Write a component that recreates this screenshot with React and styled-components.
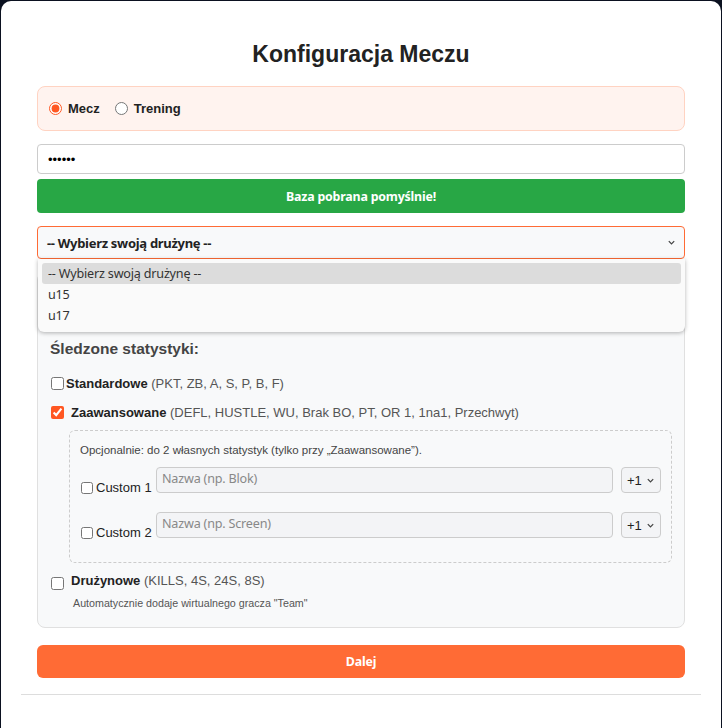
import React from "react";
import styled, { createGlobalStyle } from "styled-components";

const GlobalStyle = createGlobalStyle`
  html, body {
    margin: 0;
    padding: 0;
    background: #0b1120;
  }
  body {
    padding: 1px 1px 0 1px;
    font-family: "Liberation Sans", Arial, sans-serif;
    color: #222;
  }
`;

const uiFont = `"Noto Sans", "Open Sans", sans-serif`;

const Card = styled.div`
  background: #fff;
  border-radius: 10px 10px 0 0;
  padding: 20px 20px 34px;
  min-height: 700px;
  box-sizing: border-box;
`;

const Form = styled.div`
  padding: 0 16px 16px;
  display: flex;
  flex-direction: column;
`;

const Title = styled.h2`
  margin: 20px 0 18px;
  text-align: center;
  font-size: 23px;
  line-height: 27px;
  font-weight: bold;
  color: #222;
`;

const ModeBox = styled.div`
  display: flex;
  align-items: center;
  gap: 15px;
  height: 43px;
  padding: 0 11px;
  background: #fff3ef;
  border: 1px solid #ffd3c2;
  border-radius: 8px;
`;

const RadioLabel = styled.label`
  display: flex;
  align-items: center;
  gap: 6px;
  font-size: 13px;
  font-weight: bold;
  color: #222;

  input {
    margin: 0;
    width: 13px;
    height: 13px;
    accent-color: #ff5722;
  }
`;

const PasswordInput = styled.input`
  margin-top: 13px;
  height: 30px;
  box-sizing: border-box;
  border: 1px solid #ccc;
  border-radius: 4px;
  padding: 0 10px;
  font-size: 13px;
  background: #fff;
`;

const Button = styled.button`
  margin-top: ${(p) => p.$top}px;
  height: ${(p) => p.$height}px;
  border: none;
  border-radius: ${(p) => p.$radius}px;
  background: ${(p) => p.$bg};
  color: #fff;
  font-family: ${uiFont};
  font-size: 12.4px;
  font-weight: bold;
  letter-spacing: -0.2px;
`;

const SelectWrap = styled.div`
  position: relative;
  margin-top: 13px;
`;

const SelectBox = styled.div`
  height: 33px;
  box-sizing: border-box;
  border: 1px solid #ff6b35;
  border-radius: 4px;
  background: #f8f9fa;
  display: flex;
  align-items: center;
  justify-content: space-between;
  padding: 0 8px 0 9px;
  font-family: ${uiFont};
  font-size: 13px;
  font-weight: bold;
  letter-spacing: -0.3px;
  color: #222;
`;

const Chevron = styled.svg`
  width: 9px;
  height: 9px;
  color: #444;
`;

const Dropdown = styled.ul`
  position: absolute;
  z-index: 5;
  top: 33px;
  left: 1px;
  right: 0;
  margin: 0;
  padding: 4px 4px 6px;
  list-style: none;
  background: #fafafa;
  border-radius: 0 0 6px 6px;
  box-shadow: 0 1px 4px rgba(0, 0, 0, 0.3);
  font-family: ${uiFont};
  font-size: 12.6px;
  color: #333;
`;

const Option = styled.li`
  height: 21px;
  line-height: 21px;
  padding: 0 6px;
  border-radius: 3px;
  letter-spacing: -0.2px;
  background: ${(p) => (p.$active ? "#dcdcdc" : "transparent")};
`;

const StatsBox = styled.div`
  margin-top: 13px;
  background: #f8f9fa;
  border: 1px solid #e0e0e0;
  border-radius: 8px;
  padding: 67px 12px 17px;
`;

const StatsTitle = styled.h3`
  margin: 0 0 18px;
  font-size: 15.5px;
  line-height: 18px;
  color: #444;
  font-weight: bold;
`;

const CheckRow = styled.label`
  display: flex;
  align-items: ${(p) => (p.$low ? "flex-end" : "center")};
  gap: ${(p) => p.$gap}px;
  margin-top: ${(p) => p.$top}px;
  font-size: 13px;
  line-height: 15px;
  color: #222;

  input {
    margin: 0 0 ${(p) => (p.$low ? "-2px" : "0")} 1px;
    width: 13px;
    height: 13px;
    accent-color: #ff5722;
  }
`;

const Muted = styled.span`
  color: #555;
`;

const CustomBox = styled.div`
  margin: 10px 0 0 19px;
  border: 1px dashed #ccc;
  border-radius: 6px;
  padding: 13px 10px 22px;
`;

const CustomHint = styled.div`
  font-size: 11.5px;
  line-height: 13px;
  color: #444;
  margin-bottom: 10px;
`;

const CustomRow = styled.div`
  display: flex;
  align-items: flex-start;
  gap: 8px;
  margin-top: ${(p) => p.$top}px;
`;

const CustomLabel = styled.label`
  display: flex;
  align-items: center;
  gap: 3px;
  margin-top: 13px;
  width: 68px;
  white-space: nowrap;
  font-size: 13px;
  line-height: 15px;
  color: #222;

  input {
    margin: 0 0 0 1px;
    width: 12px;
    height: 12px;
  }
`;

const NameInput = styled.input`
  flex: 1;
  min-width: 0;
  height: 26px;
  box-sizing: border-box;
  border: 1px solid #ccc;
  border-radius: 4px;
  background: #f3f4f6;
  padding: 0 5px 4px;
  font-family: ${uiFont};
  font-size: 12.6px;
  letter-spacing: -0.2px;

  &::placeholder {
    color: #888;
  }
`;

const SmallSelect = styled.div`
  width: 40px;
  height: 26px;
  box-sizing: border-box;
  border: 1px solid #ccc;
  border-radius: 4px;
  background: #f3f4f6;
  display: flex;
  align-items: center;
  justify-content: space-between;
  padding: 0 5px;
  font-size: 13px;
  color: #222;
`;

const Note = styled.div`
  margin: 9px 0 0 23px;
  font-size: 10.7px;
  line-height: 13px;
  color: #555;
`;

const Divider = styled.hr`
  margin: 0;
  border: none;
  border-top: 1px solid #ddd;
`;

function Caret() {
  return (
    <Chevron viewBox="0 0 10 10" fill="none" stroke="currentColor" strokeWidth="1.4">
      <path d="M2 3.5 L5 6.5 L8 3.5" />
    </Chevron>
  );
}

export default function App() {
  return (
    <>
      <GlobalStyle />
      <Card>
        <Form>
          <Title>Konfiguracja Meczu</Title>
          <ModeBox>
            <RadioLabel>
              <input type="radio" name="mode" defaultChecked />
              Mecz
            </RadioLabel>
            <RadioLabel>
              <input type="radio" name="mode" />
              Trening
            </RadioLabel>
          </ModeBox>
          <PasswordInput type="password" defaultValue="123456" />
          <Button $top={5} $height={34} $radius={4} $bg="#28a745">
            Baza pobrana pomyślnie!
          </Button>
          <SelectWrap>
            <SelectBox>
              -- Wybierz swoją drużynę --
              <Caret />
            </SelectBox>
            <Dropdown>
              <Option $active>-- Wybierz swoją drużynę --</Option>
              <Option>u15</Option>
              <Option>u17</Option>
            </Dropdown>
          </SelectWrap>
          <StatsBox>
            <StatsTitle>Śledzone statystyki:</StatsTitle>
            <CheckRow $gap={2} $top={0}>
              <input type="checkbox" />
              <span>
                <b>Standardowe</b> <Muted>(PKT, ZB, A, S, P, B, F)</Muted>
              </span>
            </CheckRow>
            <CheckRow $gap={7} $top={14}>
              <input type="checkbox" defaultChecked />
              <span>
                <b>Zaawansowane</b>{" "}
                <Muted>(DEFL, HUSTLE, WU, Brak BO, PT, OR 1, 1na1, Przechwyt)</Muted>
              </span>
            </CheckRow>
            <CustomBox>
              <CustomHint>
                Opcjonalnie: do 2 własnych statystyk (tylko przy „Zaawansowane”).
              </CustomHint>
              <CustomRow $top={0}>
                <CustomLabel>
                  <input type="checkbox" />
                  Custom 1
                </CustomLabel>
                <NameInput placeholder="Nazwa (np. Blok)" />
                <SmallSelect>
                  +1
                  <Caret />
                </SmallSelect>
              </CustomRow>
              <CustomRow $top={17}>
                <CustomLabel>
                  <input type="checkbox" />
                  Custom 2
                </CustomLabel>
                <NameInput placeholder="Nazwa (np. Screen)" />
                <SmallSelect>
                  +1
                  <Caret />
                </SmallSelect>
              </CustomRow>
            </CustomBox>
            <CheckRow $gap={7} $top={10} $low>
              <input type="checkbox" />
              <span>
                <b>Drużynowe</b> <Muted>(KILLS, 4S, 24S, 8S)</Muted>
              </span>
            </CheckRow>
            <Note>Automatycznie dodaje wirtualnego gracza "Team"</Note>
          </StatsBox>
          <Button $top={17} $height={33} $radius={6} $bg="#ff6b35">
            Dalej
          </Button>
        </Form>
        <Divider />
      </Card>
    </>
  );
}
